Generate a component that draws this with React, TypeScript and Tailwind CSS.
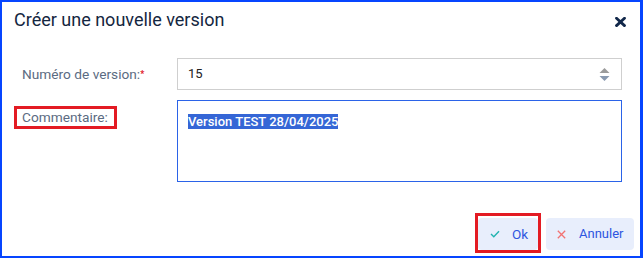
import React from "react";

export default function App() {
  return (
    <div className="w-[644px] h-[258px] bg-white" style={{ fontFamily: "Roboto, 'Liberation Sans', sans-serif" }}>
      <div className="w-[643px] h-[258px] border-2 border-r-[3px] border-[#0645ff] bg-white flex flex-col">
        {/* header */}
        <div className="flex items-start justify-between pl-[12px] pt-[6px] pr-[14px]">
          <h1 className="text-[18px] leading-[24px] text-[#142640]">Créer une nouvelle version</h1>
          <button className="mt-[9px]" aria-label="close">
            <svg width="11" height="10" viewBox="0 0 11 10">
              <path d="M1.5 1.2 L9.5 8.6 M9.5 1.2 L1.5 8.6" stroke="#12284a" strokeWidth="2.8" strokeLinecap="round" />
            </svg>
          </button>
        </div>

        {/* row 1 */}
        <div className="flex items-center pl-[12px] mt-[26px]">
          <div className="w-[163px] pl-[8px] text-[13.7px] text-[#5b6b82] flex items-center">
            <span>Numéro de version:</span>
            <span className="text-[#e0141e] text-[9px] leading-[9px] font-bold mt-[2px]">*</span>
          </div>
          <div className="w-[445px] h-[32px] border border-[#cfcfcf] flex items-center justify-between pl-[10px] pr-[11px]">
            <span className="text-[13px] text-[#222]">15</span>
            <svg width="11" height="15" viewBox="0 0 11 15">
              <path d="M5.5 1 L10.5 6 L0.5 6 Z" fill="#9b9b9b" />
              <path d="M0.5 9 L10.5 9 L5.5 14 Z" fill="#8a9ab0" />
            </svg>
          </div>
        </div>

        {/* row 2 */}
        <div className="flex items-start pl-[12px] mt-[10px]">
          <div className="w-[163px] pt-[5px]">
            <div className="inline-block border-[3px] border-[#e31b23] pl-[5px] pr-[6px] text-[13.7px] leading-[17px] text-[#5b6b82]">
              Commentaire:
            </div>
          </div>
          <div className="w-[445px] h-[82px] border border-[#2b63e8] pl-[10px] pt-[8px]">
            <span className="text-[13px] leading-[17px] bg-[#3566d6] text-white font-medium">Version TEST 28/04/2025</span>
          </div>
        </div>

        {/* footer */}
        <div className="flex items-end justify-end gap-[5px] pr-[6px] mt-[31px]">
          <div className="border-[3px] border-[#e31b23] pt-[2px]">
            <button className="w-[60px] h-[32px] bg-[#e8eefc] rounded-[4px] flex items-center pl-[12px] gap-[12px]">
              <svg width="10" height="8" viewBox="0 0 10 8">
                <path d="M1 4 L3.8 6.8 L9 1.2" stroke="#22b3b0" strokeWidth="1.4" fill="none" />
              </svg>
              <span className="text-[13.5px] text-[#2d55e0]">Ok</span>
            </button>
          </div>
          <button className="w-[88px] h-[32px] mb-[3px] bg-[#e8eefc] rounded-[4px] flex items-center pl-[11px] gap-[13px]">
            <svg width="9" height="9" viewBox="0 0 9 9">
              <path d="M0.8 0.8 L8.2 8.2 M8.2 0.8 L0.8 8.2" stroke="#f27272" strokeWidth="1.3" />
            </svg>
            <span className="text-[13px] text-[#2d55e0]">Annuler</span>
          </button>
        </div>
      </div>
    </div>
  );
}
